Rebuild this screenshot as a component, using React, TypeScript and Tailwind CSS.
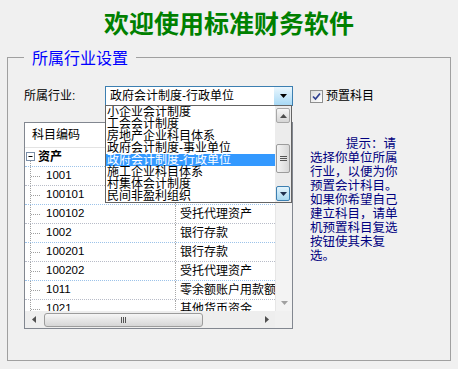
import React from "react";

// names for the first two rows sit under the open list, so they are left blank
const rows = [
  { code: "1001", name: "" },
  { code: "100101", name: "" },
  { code: "100102", name: "受托代理资产" },
  { code: "1002", name: "银行存款" },
  { code: "100201", name: "银行存款" },
  { code: "100202", name: "受托代理资产" },
  { code: "1011", name: "零余额账户用款额度" },
  { code: "1021", name: "其他货币资金" },
];

const industries = [
  "小企业会计制度",
  "工会会计制度",
  "房地产企业科目体系",
  "政府会计制度-事业单位",
  "政府会计制度-行政单位",
  "施工企业科目体系",
  "村集体会计制度",
  "民间非盈利组织",
];

function Tri({ dir, color = "#000" }: { dir: "up" | "down" | "left" | "right"; color?: string }) {
  if (dir === "up" || dir === "down") {
    return (
      <svg width="7" height="4" viewBox="0 0 7 4">
        <polygon points={dir === "down" ? "0,0 7,0 3.5,4" : "0,4 7,4 3.5,0"} fill={color} />
      </svg>
    );
  }
  return (
    <svg width="4" height="7" viewBox="0 0 4 7">
      <polygon points={dir === "right" ? "0,0 4,3.5 0,7" : "4,0 0,3.5 4,7"} fill={color} />
    </svg>
  );
}

function Grip({ vertical }: { vertical?: boolean }) {
  return vertical ? (
    <svg width="7" height="6" viewBox="0 0 7 6">
      <path d="M0 0.5h7M0 2.5h7M0 4.5h7" stroke="#555" strokeWidth="1" />
    </svg>
  ) : (
    <svg width="7" height="6" viewBox="0 0 7 6">
      <path d="M1.5 0v6M3.5 0v6M5.5 0v6" stroke="#555" strokeWidth="1" />
    </svg>
  );
}

function ComboBox() {
  return (
    <div className="relative w-[188px] h-[20px] border border-[#3c7fb1] bg-white flex items-center">
      <span className="pl-[4px] leading-[18px] whitespace-nowrap">政府会计制度-行政单位</span>
      <div className="ml-auto w-[18px] h-full flex items-center justify-center bg-linear-to-b from-[#eaf6fd] to-[#a7d9f5]">
        <Tri dir="down" />
      </div>

      {/* open list */}
      <div className="absolute left-[-1px] top-full z-10 w-[187px] h-[98px] border border-[#646464] bg-white flex">
        <div className="w-[169px] overflow-hidden">
          {industries.map((t, i) => (
            <div
              key={t}
              className={
                "h-[12px] leading-[12px] pl-[1px] whitespace-nowrap " +
                (i === 4 ? "bg-[#3399ff] text-white" : "text-black")
              }
            >
              {t}
            </div>
          ))}
        </div>
        <div className="w-[16px] bg-[#ececec] flex flex-col items-center">
          <div className="mt-[2px] w-[14px] h-[15px] rounded-[2px] border border-[#a8a8a8] bg-linear-to-b from-[#f6f6f6] to-[#d6d6d6] flex items-center justify-center">
            <Tri dir="up" color="#4d4d4d" />
          </div>
          <div className="mt-[21px] w-[14px] h-[29px] rounded-[2px] border border-[#9c9c9c] bg-linear-to-r from-[#f4f4f4] to-[#d8d8d8] flex items-center justify-center">
            <Grip vertical />
          </div>
          <div className="mt-[13px] w-[14px] h-[15px] rounded-[2px] border border-[#3c7fb1] bg-linear-to-b from-[#e3f4fc] to-[#a9d9f2] flex items-center justify-center">
            <Tri dir="down" color="#1f2f4f" />
          </div>
        </div>
      </div>
    </div>
  );
}

function TreeGrid() {
  return (
    <div className="w-[269px] h-[207px] border border-[#828790] bg-white flex flex-col">
      <div className="flex">
        <div className="w-[250px] h-[188px] overflow-hidden bg-white">
          {/* header */}
          <div className="flex h-[25px] bg-white border-b border-[#e3e3e3]">
            <div className="w-[151px] pl-[7px] flex items-center border-r border-[#e3e3e3]">科目编码</div>
            <div className="flex-1" />
          </div>
          {/* root */}
          <div className="flex h-[19px] border-b border-dotted border-[#9cc3ea]">
            <div className="w-[151px] flex items-center border-r border-dotted border-[#a8a8a8]">
              <svg width="13" height="18" viewBox="0 0 13 18" className="shrink-0">
                <rect x="1.5" y="4.5" width="8" height="8" fill="#fff" stroke="#7a8ea8" />
                <path d="M3.5 8.5h4" stroke="#000" />
                <path d="M5.5 13v5" stroke="#a0a0a0" strokeDasharray="1 1" />
              </svg>
              <span className="font-bold">资产</span>
            </div>
            <div className="flex-1" />
          </div>
          {rows.map((r, i) => (
            <div
              key={r.code + i}
              className={
                "flex h-[19px] border-b border-dotted " +
                (i % 2 === 0 ? "border-[#b8bcc8]" : "border-[#9cc3ea]")
              }
            >
              <div className="w-[151px] flex items-center border-r border-dotted border-[#a8a8a8]">
                <svg width="21" height="18" viewBox="0 0 21 18" className="shrink-0">
                  <path d="M5.5 0v18M6 9.5h10" stroke="#a0a0a0" strokeDasharray="1 1" />
                </svg>
                <span className="text-[11.5px]">{r.code}</span>
              </div>
              <div className="flex-1 pl-[4px] flex items-center whitespace-nowrap overflow-hidden">{r.name}</div>
            </div>
          ))}
        </div>
        {/* vertical scrollbar */}
        <div className="w-[17px] h-[188px] bg-[#f3f3f3] border-l border-[#e6e6e6] flex flex-col justify-between items-center">
          <div className="w-[15px] h-[17px] flex items-center justify-center">
            <Tri dir="up" color="#a0a0a0" />
          </div>
          <div className="w-[15px] h-[17px] flex items-center justify-center">
            <Tri dir="down" color="#a0a0a0" />
          </div>
        </div>
      </div>
      <div className="flex">
        {/* horizontal scrollbar */}
        <div className="w-[250px] h-[17px] bg-[#eeeeee] flex items-center">
          <div className="w-[17px] h-full flex items-center justify-center">
            <Tri dir="left" color="#505050" />
          </div>
          <div className="ml-[2px] w-[159px] h-[14px] rounded-[3px] border border-[#9c9c9c] bg-linear-to-b from-[#f6f6f6] to-[#d6d6d6] flex items-center justify-center">
            <Grip />
          </div>
          <div className="flex-1" />
          <div className="w-[17px] h-full flex items-center justify-center">
            <Tri dir="right" color="#505050" />
          </div>
        </div>
        <div className="w-[17px] h-[17px] bg-[#f0f0f0]" />
      </div>
    </div>
  );
}

export default function App() {
  return (
    <div className="w-[458px] h-[369px] bg-[#f0f0f0] overflow-hidden text-[12px] text-black font-['Liberation_Sans','Noto_Sans_CJK_SC',sans-serif]">
      <h1 className="h-[47px] pt-[7px] text-center text-[25px] leading-[30px] font-bold text-[#008000] font-['Noto_Sans_CJK_SC',sans-serif]">
        欢迎使用标准财务软件
      </h1>

      <fieldset className="mx-[7px] h-[314px] border border-[#a0a0a0]">
        <legend className="ml-[16px] px-[8px] text-[16px] leading-[20px] text-[#0000ff] font-['Noto_Sans_CJK_SC',sans-serif]">
          所属行业设置
        </legend>

        <div className="pl-[16px]">
          <div className="flex items-center mt-[19px] h-[20px]">
            <span className="w-[81px] whitespace-nowrap">所属行业:</span>
            <ComboBox />
            <div className="ml-[17px] flex items-center">
              <div className="w-[13px] h-[13px] border border-[#8e8f8f] bg-linear-to-br from-[#dcdcdc] to-white flex items-center justify-center">
                <svg width="9" height="9" viewBox="0 0 9 9">
                  <path d="M1 4.5 L3.5 7 L8 1.5" fill="none" stroke="#2f3f8f" strokeWidth="1.7" />
                </svg>
              </div>
              <span className="ml-[3px]">预置科目</span>
            </div>
          </div>

          <div className="flex mt-[16px]">
            <TreeGrid />
            <div className="ml-[17px] pt-[15px] text-[#000080] text-[12.5px] leading-[14px] whitespace-nowrap">
              <div className="pl-[36px]">提示：请</div>
              <div>选择你单位所属</div>
              <div>行业，以便为你</div>
              <div>预置会计科目。</div>
              <div>如果你希望自己</div>
              <div>建立科目，请单</div>
              <div>机预置科目复选</div>
              <div>按钮使其未复</div>
              <div>选。</div>
            </div>
          </div>
        </div>
      </fieldset>
    </div>
  );
}
